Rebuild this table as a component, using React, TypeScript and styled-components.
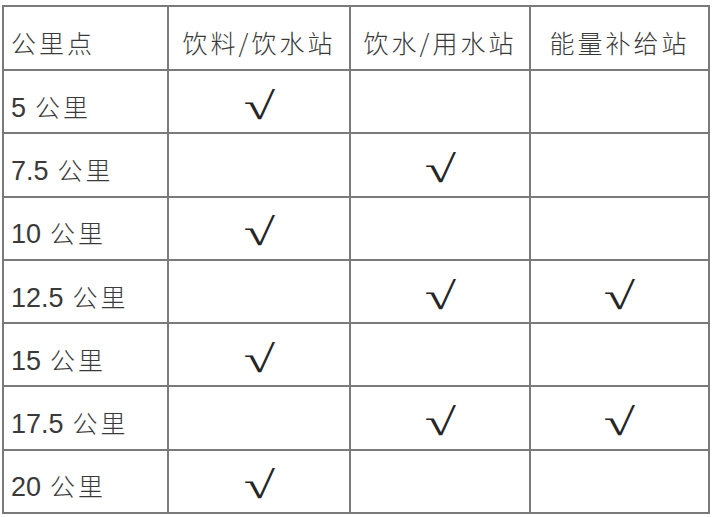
import React from "react";
import styled, { createGlobalStyle } from "styled-components";

const GlobalStyle = createGlobalStyle`
  html, body {
    margin: 0;
    padding: 0;
    background: #ffffff;
  }
`;

const rows = [
  { num: "5", marks: [true, false, false] },
  { num: "7.5", marks: [false, true, false] },
  { num: "10", marks: [true, false, false] },
  { num: "12.5", marks: [false, true, true] },
  { num: "15", marks: [true, false, false] },
  { num: "17.5", marks: [false, true, true] },
  { num: "20", marks: [true, false, false] },
];

const headers = ["饮料/饮水站", "饮水/用水站", "能量补给站"];

const Page = styled.div`
  padding: 5px 0 0 2px;
`;

const Grid = styled.div`
  display: grid;
  grid-template-columns: 165px 182px 180px 179px;
  grid-template-rows: 64px repeat(7, 63.3px);
  width: 708px;
  border-top: 2px solid #7a7a7a;
  border-left: 2px solid #7a7a7a;
  box-sizing: border-box;
  font-family: "Noto Sans CJK SC Light", "Noto Sans CJK SC", sans-serif;
  font-weight: 300;
  color: #3a3a3a;
`;

const Cell = styled.div<{ $left?: boolean }>`
  display: flex;
  align-items: center;
  justify-content: ${(p) => (p.$left ? "flex-start" : "center")};
  padding: 8px 0 0 ${(p) => (p.$left ? "7px" : "0")};
  box-sizing: border-box;
  border-right: 2px solid #7a7a7a;
  border-bottom: 2px solid #7a7a7a;
  font-size: 25px;
  letter-spacing: 3px;
  white-space: nowrap;
`;

const Label = styled.span`
  display: inline-block;
`;

const Num = styled.span`
  font-family: "Liberation Sans", sans-serif;
  font-weight: 400;
  font-size: 27px;
  letter-spacing: 0;
  margin-right: 9px;
`;

const Check = styled.span`
  display: inline-block;
  font-family: "Liberation Serif", serif;
  font-size: 38px;
  line-height: 1;
  color: #262626;
  letter-spacing: 0;
  transform: scaleX(1.5);
`;

export default function App() {
  return (
    <>
      <GlobalStyle />
      <Page>
        <Grid>
          <Cell $left>公里点</Cell>
          {headers.map((h) => (
            <Cell key={h}>{h}</Cell>
          ))}
          {rows.map((r) => (
            <React.Fragment key={r.num}>
              <Cell $left>
                <Label>
                  <Num>{r.num}</Num>公里
                </Label>
              </Cell>
              {r.marks.map((m, i) => (
                <Cell key={i}>{m && <Check>√</Check>}</Cell>
              ))}
            </React.Fragment>
          ))}
        </Grid>
      </Page>
    </>
  );
}
